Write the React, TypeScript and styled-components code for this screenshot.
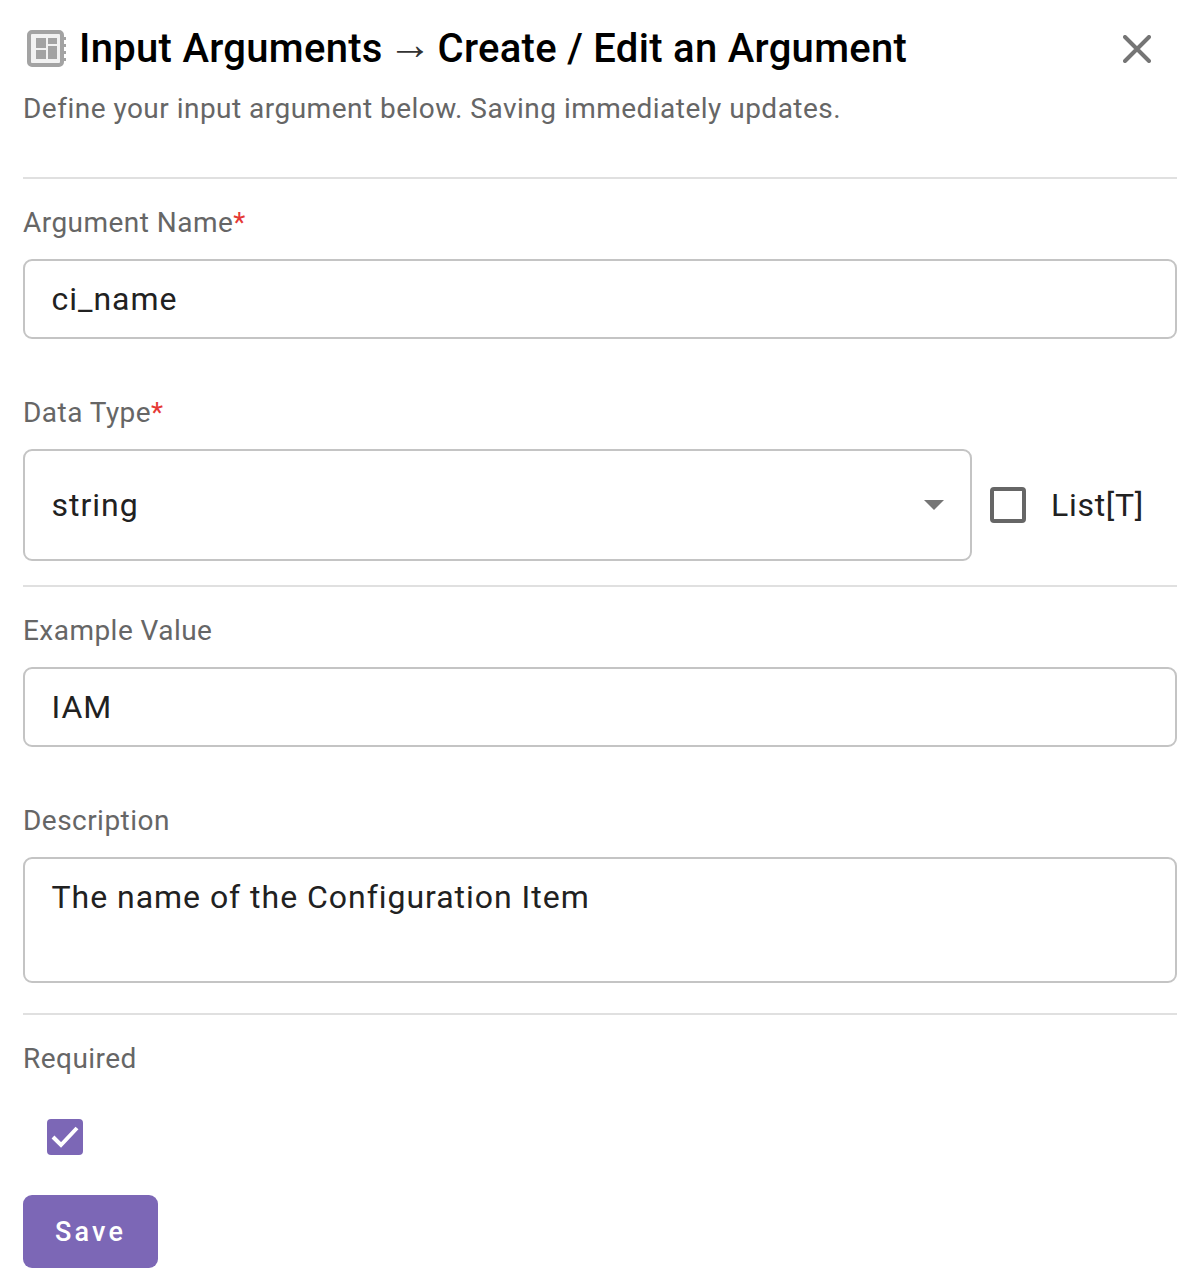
import React from "react";
import styled, { createGlobalStyle } from "styled-components";

const Global = createGlobalStyle`
  html, body { margin: 0; padding: 0; background: #fff; }
  body { font-family: Roboto, "Liberation Sans", sans-serif; }
`;

const Page = styled.div`
  width: 1188px;
  height: 1278px;
  box-sizing: border-box;
  padding: 24px 11px 0 23px;
  overflow: hidden;
`;

const Header = styled.div`
  display: flex;
  align-items: center;
  height: 50px;
`;

const Title = styled.h1`
  margin: 0 0 0 10px;
  font-size: 40px;
  line-height: 48px;
  font-weight: 500;
  color: #000;
  letter-spacing: 0.3px;
  white-space: nowrap;
  flex: 1;
`;

const Arrow = styled.span`
  font-family: "Liberation Sans", sans-serif;
  font-size: 44px;
  line-height: 0;
  font-weight: 400;
  color: #333;
  vertical-align: 3px;
  margin: 0 -5px;
`;

const CloseButton = styled.button`
  border: 0;
  background: none;
  padding: 0;
  width: 40px;
  height: 40px;
  margin-right: 20px;
  display: flex;
  align-items: center;
  justify-content: center;
`;

const Subtitle = styled.p`
  margin: 10px 0 0;
  font-size: 28px;
  line-height: 50px;
  height: 44px;
  color: #666;
  letter-spacing: 0.48px;
`;

const Divider = styled.hr<{ $top: number }>`
  margin: ${(p) => p.$top}px 0 0;
  border: 0;
  height: 2px;
  background: #e0e0e0;
`;

const Label = styled.div<{ $top: number }>`
  margin-top: ${(p) => p.$top}px;
  height: 38px;
  font-size: 28px;
  line-height: 40px;
  color: #666;
  letter-spacing: 0.46px;
`;

const Star = styled.span`
  color: #e53935;
`;

const Field = styled.div<{ $h: number; $align?: string }>`
  box-sizing: border-box;
  height: ${(p) => p.$h}px;
  border: 2px solid #c4c4c4;
  border-radius: 9px;
  padding: 0 26px 0 26.5px;
  margin-top: 18px;
  display: flex;
  align-items: ${(p) => p.$align ?? "center"};
  font-size: 32px;
  color: #212121;
  letter-spacing: 0.97px;
  flex: 1;
`;

const TextareaText = styled.span`
  line-height: 36px;
  margin-top: 20px;
`;

const Row = styled.div`
  display: flex;
  align-items: center;
  margin-top: 18px;
`;

const SelectField = styled(Field)`
  margin-top: 0;
  justify-content: space-between;
  flex: 0 0 949px;
`;

const Caret = styled.div`
  width: 0;
  height: 0;
  border-left: 10px solid transparent;
  border-right: 10px solid transparent;
  border-top: 10px solid #757575;
`;

const Checkbox = styled.div`
  box-sizing: border-box;
  width: 36px;
  height: 36px;
  border: 4px solid #666;
  border-radius: 4px;
  margin-left: 18px;
`;

const ListLabel = styled.span`
  margin-left: 25px;
  font-size: 32px;
  color: #212121;
  letter-spacing: 0.7px;
`;

const Checked = styled.div`
  width: 36px;
  height: 36px;
  margin: 42px 0 0 24px;
  background: #7c67b6;
  border-radius: 4px;
  display: flex;
  align-items: center;
  justify-content: center;
`;

const SaveButton = styled.button`
  display: block;
  width: 135px;
  height: 73px;
  margin-top: 40px;
  border: 0;
  border-radius: 9px;
  background: #7c67b6;
  color: #fff;
  font-family: Roboto, "Liberation Sans", sans-serif;
  font-size: 27px;
  font-weight: 500;
  letter-spacing: 3.2px;
`;

const PanelIcon = () => (
  <svg width="42" height="38" viewBox="0 0 42 38" fill="none" style={{ flex: "none", marginLeft: 4 }}>
    <rect x="2" y="2" width="33" height="33" rx="3" stroke="#a3a3a3" fill="#f2f2f2" strokeWidth="4" />
    <rect x="9" y="8" width="10" height="10" fill="#a3a3a3" />
    <rect x="21" y="8" width="9" height="6" fill="#a3a3a3" />
    <rect x="9" y="20" width="10" height="9" fill="#a3a3a3" />
    <rect x="21" y="16" width="9" height="13" fill="#a3a3a3" />
    <rect x="35" y="7" width="4" height="3" fill="#a3a3a3" />
    <rect x="35" y="14" width="4" height="3" fill="#a3a3a3" />
    <rect x="35" y="21" width="4" height="3" fill="#a3a3a3" />
    <rect x="35" y="28" width="4" height="3" fill="#a3a3a3" />
  </svg>
);

export default function App() {
  return (
    <Page>
      <Global />
      <Header>
        <PanelIcon />
        <Title>
          Input Arguments <Arrow>→</Arrow> Create / Edit an Argument
        </Title>
        <CloseButton aria-label="Close">
          <svg width="28" height="28" viewBox="0 0 28 28">
            <path d="M2 2 L26 26 M26 2 L2 26" stroke="#757575" strokeWidth="4" strokeLinecap="round" />
          </svg>
        </CloseButton>
      </Header>
      <Subtitle>Define your input argument below. Saving immediately updates.</Subtitle>
      <Divider $top={49} />
      <Label $top={24}>
        Argument Name<Star>*</Star>
      </Label>
      <Field $h={80}>ci_name</Field>
      <Label $top={54}>
        Data Type<Star>*</Star>
      </Label>
      <Row>
        <SelectField $h={112}>
          string
          <Caret />
        </SelectField>
        <Checkbox />
        <ListLabel>List[T]</ListLabel>
      </Row>
      <Divider $top={24} />
      <Label $top={24}>Example Value</Label>
      <Field $h={80}>IAM</Field>
      <Label $top={54}>Description</Label>
      <Field $h={126} $align="flex-start">
        <TextareaText>The name of the Configuration Item</TextareaText>
      </Field>
      <Divider $top={30} />
      <Label $top={24}>Required</Label>
      <Checked>
        <svg width="30" height="24" viewBox="0 0 30 24">
          <path d="M3 12 L11 20 L27 3" fill="none" stroke="#fff" strokeWidth="4" />
        </svg>
      </Checked>
      <SaveButton>Save</SaveButton>
    </Page>
  );
}
